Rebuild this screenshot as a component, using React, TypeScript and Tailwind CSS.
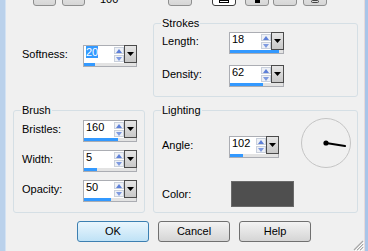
import React from "react";

type SpinProps = {
  value: string;
  fill: number;
  w: string;
  selected?: boolean;
};

// spin edit with a slider strip underneath, PSP style
function Spin({ value, fill, w, selected }: SpinProps) {
  return (
    <div className={`flex flex-col border border-[#abadb3] bg-white ${w}`}>
      <div className="flex h-[17px]">
        <div className="flex-1 pl-[2px] text-[11px] leading-[13px] text-black">
          {selected ? <span className="bg-[#3399ff] text-white">{value}</span> : value}
        </div>
        <div className="flex w-[10px] flex-col gap-px pt-px">
          <div className="flex h-[7px] items-center justify-center border border-[#c9d0dc] bg-[#eef1f6]">
            <svg width="6" height="4" viewBox="0 0 6 4">
              <path d="M0 4 L3 0 L6 4 Z" fill="#5d7fd8" />
            </svg>
          </div>
          <div className="flex h-[7px] items-center justify-center border border-[#c9d0dc] bg-[#eef1f6]">
            <svg width="6" height="4" viewBox="0 0 6 4">
              <path d="M0 0 L6 0 L3 4 Z" fill="#7e9ae0" />
            </svg>
          </div>
        </div>
        <div className="-mr-px -mt-px flex h-[18px] w-[13px] items-center justify-center border border-[#4b4b4b] bg-gradient-to-b from-[#e6e6e6] to-[#c8c8c8]">
          <svg width="7" height="4" viewBox="0 0 7 4">
            <path d="M0 0 L7 0 L3.5 4 Z" fill="#000" />
          </svg>
        </div>
      </div>
      <div className="h-[3px] bg-[#e3e3e3]">
        <div className="h-full bg-[#3399ff]" style={{ width: fill }} />
      </div>
    </div>
  );
}

function Row({ label, lw, children }: { label: string; lw: string; children: React.ReactNode }) {
  return (
    <div className="flex items-start">
      <div className={`${lw} text-[11px] leading-[19px] text-black`}>{label}</div>
      {children}
    </div>
  );
}

function ToolBtn({ ml, w, children, dark }: { ml: string; w: string; children?: React.ReactNode; dark?: boolean }) {
  return (
    <div
      className={`${ml} ${w} flex h-[22px] items-end justify-center rounded-[3px] border pb-[2px] ${
        dark ? "border-[#3c3c3c] bg-white" : "border-[#8e8f8f] bg-gradient-to-b from-[#f2f2f2] to-[#d6d6d6]"
      }`}
    >
      {children}
    </div>
  );
}

function DlgButton({ label, def }: { label: string; def?: boolean }) {
  return (
    <button
      className={`flex h-[21px] w-[72px] items-center justify-center rounded-[3px] border text-[11px] text-black ${
        def
          ? "border-[#3c7fb1] bg-gradient-to-b from-[#eaf6fd] to-[#bfe2f6]"
          : "border-[#707070] bg-gradient-to-b from-[#f3f3f3] to-[#d5d5d5]"
      }`}
    >
      {label}
    </button>
  );
}

export default function App() {
  return (
    <div className="relative flex h-[251px] w-[368px] overflow-hidden bg-[#f0f0f0] font-['Liberation_Sans',Arial,sans-serif]">
      {/* window frame, left */}
      <div className="w-[6px] border-r border-[#d3e2f3] bg-[#bad1eb]" />

      <div className="flex flex-1 flex-col">
        {/* toolbar, mostly scrolled off the top */}
        <div className="flex h-[6px] items-end">
          <ToolBtn ml="ml-[27px]" w="w-[23px]" />
          <ToolBtn ml="ml-[6px]" w="w-[23px]" />
          <div className="ml-[15px] text-[11px] leading-[13px] text-black">100</div>
          <ToolBtn ml="ml-[50px]" w="w-[24px]" />
          <ToolBtn ml="ml-[20px]" w="w-[24px]" dark>
            <div className="h-[3px] w-[10px] border border-black" />
          </ToolBtn>
          <ToolBtn ml="ml-[9px]" w="w-[24px]">
            <div className="h-[4px] w-[5px] bg-black" />
          </ToolBtn>
          <ToolBtn ml="ml-[4px]" w="w-[24px]" />
          <ToolBtn ml="ml-[6px]" w="w-[24px]">
            <div className="h-[3px] w-[8px] rounded-sm border border-[#444]" />
          </ToolBtn>
        </div>

        <div className="mt-[11px] grid grid-cols-[132px_205px] gap-x-[8px] gap-y-[7px] pl-[7px]">
          {/* softness, outside any group */}
          <div className="pl-[9px] pt-[28px]">
            <Row label="Softness:" lw="w-[61px]">
              <Spin value="20" fill={11} w="w-[54px]" selected />
            </Row>
          </div>

          <fieldset className="h-[80px] rounded-[3px] border border-[#d5dfe5]">
            <legend className="ml-[7px] px-px text-[11px] leading-[13px] text-black">Strokes</legend>
            <div className="flex flex-col gap-[11px] pl-[8px] pt-[2px]">
              <Row label="Length:" lw="w-[67px]">
                <Spin value="18" fill={49} w="w-[55px]" />
              </Row>
              <Row label="Density:" lw="w-[67px]">
                <Spin value="62" fill={33} w="w-[55px]" />
              </Row>
            </div>
          </fieldset>

          <fieldset className="h-[109px] rounded-[3px] border border-[#d5dfe5]">
            <legend className="ml-[7px] px-px text-[11px] leading-[13px] text-black">Brush</legend>
            <div className="flex flex-col gap-[8px] pl-[8px] pt-[3px]">
              <Row label="Bristles:" lw="w-[61px]">
                <Spin value="160" fill={34} w="w-[54px]" />
              </Row>
              <Row label="Width:" lw="w-[61px]">
                <Spin value="5" fill={13} w="w-[54px]" />
              </Row>
              <Row label="Opacity:" lw="w-[61px]">
                <Spin value="50" fill={27} w="w-[54px]" />
              </Row>
            </div>
          </fieldset>

          <fieldset className="h-[109px] rounded-[3px] border border-[#d5dfe5]">
            <legend className="ml-[7px] px-px text-[11px] leading-[13px] text-black">Lighting</legend>
            <div className="flex pl-[8px]">
              <div className="flex flex-col pt-[19px]">
                <Row label="Angle:" lw="w-[67px]">
                  <Spin value="102" fill={13} w="w-[50px]" />
                </Row>
                <div className="mt-[23px] flex items-center">
                  <div className="w-[67px] text-[11px] leading-[19px] text-black">Color:</div>
                  <div className="ml-[2px] h-[26px] w-[63px] border border-[#6a6a6a] bg-[#4f4f4f]" />
                </div>
              </div>
              {/* light direction dial */}
              <svg className="ml-auto mr-[6px] mt-[1px]" width="50" height="50" viewBox="0 0 50 50">
                <circle cx="25" cy="25" r="24.5" fill="none" stroke="#c4c4c4" strokeWidth="1" />
                <line x1="25" y1="25" x2="44" y2="28" stroke="#000" strokeWidth="2" strokeLinecap="round" />
                <circle cx="25" cy="25" r="2.6" fill="#000" />
              </svg>
            </div>
          </fieldset>
        </div>

        <div className="mt-[8px] flex gap-[9px] pl-[71px]">
          <DlgButton label="OK" def />
          <DlgButton label="Cancel" />
          <DlgButton label="Help" />
        </div>
      </div>

      {/* window frame, right */}
      <div className="w-[4px] border-l border-[#e9d9d9] bg-[#a9c5e8]" />

      {/* size grip */}
      <svg className="absolute bottom-0 right-[4px]" width="12" height="12" viewBox="0 0 12 12">
        <path d="M11 2 L2 11 M11 5 L5 11 M11 8 L8 11" stroke="#a8a8a8" strokeWidth="1.2" />
        <path d="M12 3 L3 12 M12 6 L6 12 M12 9 L9 12" stroke="#ffffff" strokeWidth="1" />
      </svg>
    </div>
  );
}
